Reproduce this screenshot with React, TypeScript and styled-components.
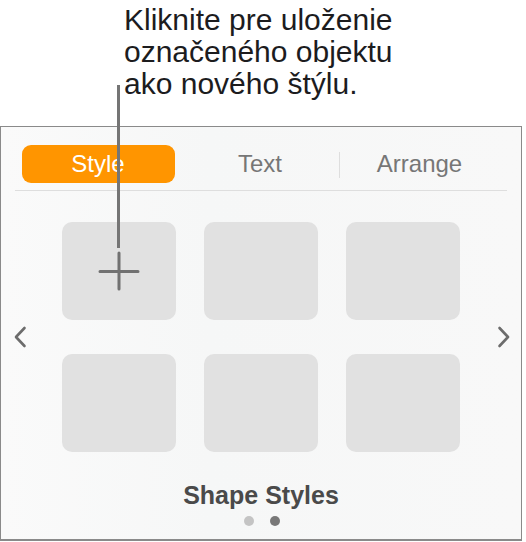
import React from "react";
import styled, { createGlobalStyle } from "styled-components";

const GlobalStyle = createGlobalStyle`
  html, body { margin: 0; padding: 0; background: #ffffff; }
  body { font-family: "Liberation Sans", Arial, sans-serif; }
  * { box-sizing: border-box; }
`;

const Page = styled.div`
  position: relative;
  width: 526px;
  height: 542px;
  overflow: hidden;
`;

const Callout = styled.div`
  height: 126px;
  padding: 4px 0 0 124px;
  font-size: 30px;
  line-height: 32px;
  color: #1c1c1e;
`;

const Leader = styled.div`
  position: absolute;
  left: 117px;
  top: 85px;
  width: 2.5px;
  height: 163px;
  background: #757575;
  z-index: 2;
`;

const Panel = styled.div`
  width: 522px;
  height: 415px;
  border: 1.5px solid #8a8a8a;
  border-bottom-width: 2px;
  background: linear-gradient(90deg, #fafafa 0%, #f6f7f7 40%, #f8f8f8 100%);
  display: flex;
  flex-direction: column;
`;

const TabBar = styled.div`
  margin: 0 14px 0 13.5px;
  padding: 17.5px 7px 7px 7px;
  border-bottom: 1.5px solid #dedede;
  display: grid;
  grid-template-columns: 159px 159px 160px;
`;

const Tab = styled.div<{ $active?: boolean; $divider?: boolean }>`
  position: relative;
  height: 38px;
  width: ${(p) => (p.$active ? "153px" : "auto")};
  border-radius: 9px;
  background: ${(p) => (p.$active ? "#ff9500" : "transparent")};
  color: ${(p) => (p.$active ? "#ffffff" : "#767676")};
  font-size: 24px;
  line-height: 38px;
  text-align: center;
  ${(p) =>
    p.$divider
      ? `
    &::before {
      content: "";
      position: absolute;
      left: -1px;
      top: 7px;
      width: 1.5px;
      height: 26px;
      background: #dedede;
    }
  `
      : ""}
`;

const Carousel = styled.div`
  margin-top: 31.5px;
  display: grid;
  grid-template-columns: 60.5px 398px 1fr;
  align-items: center;
`;

const Nav = styled.button<{ $side: "left" | "right" }>`
  border: none;
  background: none;
  padding: 0;
  display: flex;
  justify-content: flex-start;
  padding-left: ${(p) => (p.$side === "left" ? "11.5px" : "37.5px")};
  color: #6e6e6e;
  cursor: pointer;
`;

const TileGrid = styled.div`
  display: grid;
  grid-template-columns: repeat(3, 114px);
  grid-auto-rows: 98px;
  column-gap: 28px;
  row-gap: 34px;
`;

const Tile = styled.div`
  border-radius: 10px;
  background: #e1e1e1;
  display: flex;
  align-items: center;
  justify-content: center;
`;

const Caption = styled.div`
  margin-top: 28px;
  text-align: center;
  font-size: 25px;
  line-height: 30px;
  font-weight: 700;
  color: #4a4a4a;
`;

const Dots = styled.div`
  margin-top: 5.5px;
  display: flex;
  justify-content: center;
  gap: 16px;
  padding-left: 1px;
`;

const Dot = styled.span<{ $on?: boolean }>`
  width: 10px;
  height: 10px;
  border-radius: 50%;
  background: ${(p) => (p.$on ? "#787878" : "#c4c4c4")};
`;

const Plus = () => (
  <svg width="42" height="40" viewBox="0 0 42 40" fill="none">
    <path d="M2 20.5H40M21 2V38" stroke="#717171" strokeWidth="3" strokeLinecap="round" />
  </svg>
);

const Chevron = ({ dir }: { dir: "left" | "right" }) => (
  <svg width="14" height="22" viewBox="0 0 14 22" fill="none">
    <path
      d={dir === "left" ? "M11.5 2L3 11L11.5 20" : "M2.5 2L11 11L2.5 20"}
      stroke="#6c6c6c"
      strokeWidth="2.6"
      strokeLinecap="round"
      strokeLinejoin="round"
    />
  </svg>
);

export default function App() {
  return (
    <Page>
      <GlobalStyle />
      <Callout>
        Kliknite pre uloženie
        <br />
        označeného objektu
        <br />
        ako nového štýlu.
      </Callout>
      <Leader />
      <Panel>
        <TabBar>
          <Tab $active>Style</Tab>
          <Tab>Text</Tab>
          <Tab $divider>Arrange</Tab>
        </TabBar>
        <Carousel>
          <Nav $side="left" aria-label="Previous">
            <Chevron dir="left" />
          </Nav>
          <TileGrid>
            <Tile>
              <Plus />
            </Tile>
            <Tile />
            <Tile />
            <Tile />
            <Tile />
            <Tile />
          </TileGrid>
          <Nav $side="right" aria-label="Next">
            <Chevron dir="right" />
          </Nav>
        </Carousel>
        <Caption>Shape Styles</Caption>
        <Dots>
          <Dot />
          <Dot $on />
        </Dots>
      </Panel>
    </Page>
  );
}
